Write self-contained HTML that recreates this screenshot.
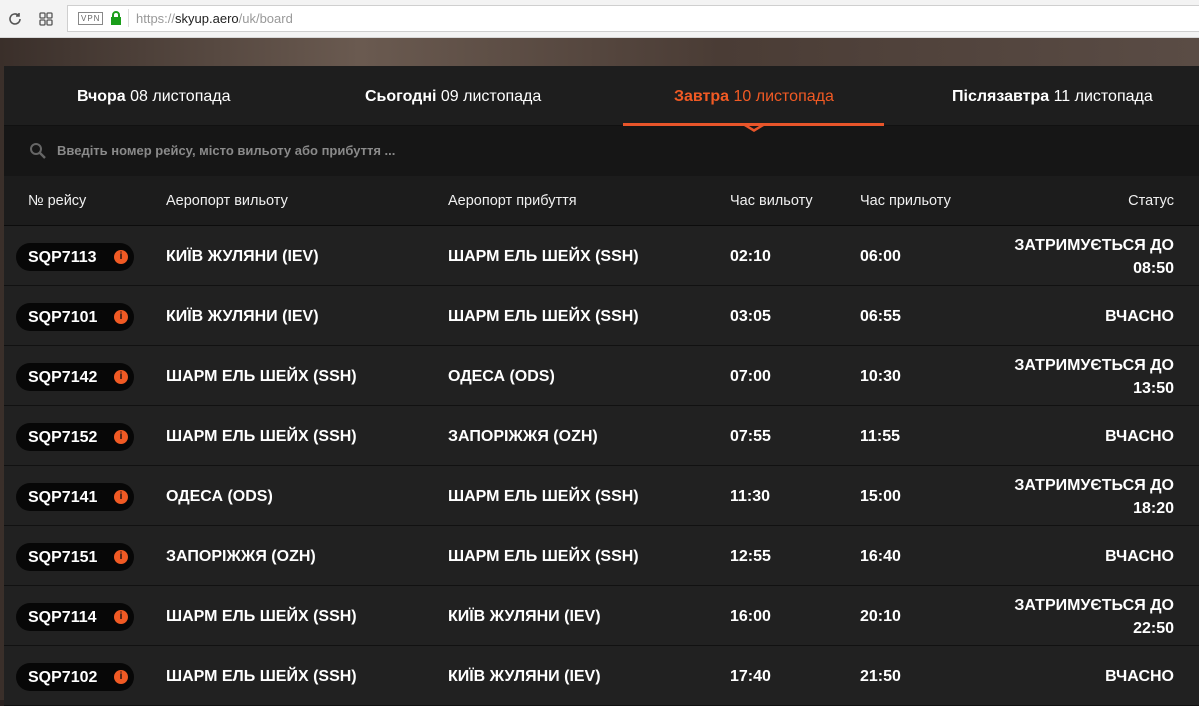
<!DOCTYPE html>
<html><head><meta charset="utf-8"><style>
*{margin:0;padding:0;box-sizing:border-box}
body{width:1199px;height:700px;overflow:hidden;background:#2a2220;font-family:"Liberation Sans","DejaVu Sans",sans-serif;position:relative}
.bar{position:absolute;left:0;top:0;width:1199px;height:38px;background:#f3f3f3;border-bottom:1px solid #d8d8d8}
.url{position:absolute;left:67px;top:5px;width:1140px;height:27px;background:#fff;border:1px solid #cfcfcf}
.bg{position:absolute;left:0;top:38px;width:1199px;height:662px;background:linear-gradient(90deg,#3a2f2a,#6a5a50 30%,#4a3c35 60%,#5a4c45 100%)}
.panel{position:absolute;left:4px;top:66px;width:1200px;height:640px;background:#1d1d1d;border-radius:6px 0 0 0;color:#fff}
.tabs{height:60px;position:relative;border-bottom:1px solid #111;background:#1e1e1e;z-index:2}
.tab{position:absolute;top:22px;font-size:16px;color:#fff}
.tab b{font-weight:bold}
.search{height:50px;background:#161616;position:relative}
.ch{height:50px;position:relative;border-bottom:1px solid #0c0c0c;background:#1c1c1c}
.ch span{position:absolute;top:17px;font-size:14.5px;color:#f0f0f0}
.row{height:60px;position:relative;border-bottom:1px solid #111;background:#212121}
.row span{position:absolute;font-size:16px;font-weight:bold;top:22px}
.pill{position:absolute;left:12px;top:17px;width:118px;height:28px;background:#070707;border-radius:14px}
.pill b{position:absolute;left:12px;top:6px;font-size:16px}
.pill i{position:absolute;left:98px;top:7px;width:14px;height:14px;border-radius:50%;background:#f15a24;color:#111;font-size:10px;font-style:normal;font-weight:bold;text-align:center;line-height:14px}
.st{position:absolute;right:30px;text-align:right;font-size:16px;font-weight:bold;line-height:23px}
</style></head><body>
<div class="bar">
<svg style="position:absolute;left:7px;top:11px" width="16" height="16" viewBox="0 0 16 16"><path d="M13 8a5 5 0 1 1-1.5-3.6M12 2v3h-3" fill="none" stroke="#555" stroke-width="1.6"/></svg>
<svg style="position:absolute;left:39px;top:12px" width="14" height="14"><rect x="1" y="1" width="5" height="5" rx="1" fill="none" stroke="#555" stroke-width="1.3"/><rect x="8" y="1" width="5" height="5" rx="1" fill="none" stroke="#555" stroke-width="1.3"/><rect x="1" y="8" width="5" height="5" rx="1" fill="none" stroke="#555" stroke-width="1.3"/><rect x="8" y="8" width="5" height="5" rx="1" fill="none" stroke="#555" stroke-width="1.3"/></svg>
<div class="url">
<div style="position:absolute;left:10px;top:6px;border:1px solid #888;font-size:8px;color:#666;padding:1px 2px;letter-spacing:1px">VPN</div>
<svg style="position:absolute;left:42px;top:4px" width="12" height="16"><path d="M3 7V5a3 3 0 0 1 6 0v2" fill="none" stroke="#1a9e1a" stroke-width="2"/><rect x="1" y="7" width="10" height="8" fill="#1a9e1a"/></svg>
<div style="position:absolute;left:60px;top:3px;height:18px;border-left:1px solid #ddd"></div>
<div style="position:absolute;left:68px;top:5px;font-size:13px;color:#999">https://<span style="color:#222">skyup.aero</span>/uk/board</div>
</div></div>
<div class="bg"></div>
<div class="panel">
<div class="tabs">
<div class="tab" style="left:73px"><b>Вчора</b> 08 листопада</div>
<div class="tab" style="left:361px"><b>Сьогодні</b> 09 листопада</div>
<div class="tab" style="left:670px;color:#f15a24"><b>Завтра</b> 10 листопада</div>
<div class="tab" style="left:948px"><b>Післязавтра</b> 11 листопада</div>
<div style="position:absolute;left:619px;top:57px;width:261px;height:3px;background:#e8552a"></div>
<svg style="position:absolute;left:740px;top:57px" width="20" height="9"><path d="M0 1.5L10 7.5L20 1.5" fill="none" stroke="#e8552a" stroke-width="2.5"/></svg>
</div>
<div class="search">
<svg style="position:absolute;left:25px;top:16px" width="17" height="17"><circle cx="7" cy="7" r="5" fill="none" stroke="#666" stroke-width="2"/><path d="M11 11l5 5" stroke="#666" stroke-width="2.4"/></svg>
<div style="position:absolute;left:53px;top:17px;font-size:13px;color:#8a8a8a;font-weight:bold">Введіть номер рейсу, місто вильоту або прибуття ...</div>
</div>
<div class="ch"><span style="left:24px">№ рейсу</span><span style="left:162px">Аеропорт вильоту</span><span style="left:444px">Аеропорт прибуття</span><span style="left:726px">Час вильоту</span><span style="left:856px">Час прильоту</span><span style="right:30px">Статус</span></div>

<div class="row"><div class="pill"><b>SQP7113</b><i>i</i></div><span style="left:162px">КИЇВ ЖУЛЯНИ (IEV)</span><span style="left:444px">ШАРМ ЕЛЬ ШЕЙХ (SSH)</span><span style="left:726px">02:10</span><span style="left:856px">06:00</span><div class="st" style="top:8px">ЗАТРИМУЄТЬСЯ ДО<br>08:50</div></div>
<div class="row"><div class="pill"><b>SQP7101</b><i>i</i></div><span style="left:162px">КИЇВ ЖУЛЯНИ (IEV)</span><span style="left:444px">ШАРМ ЕЛЬ ШЕЙХ (SSH)</span><span style="left:726px">03:05</span><span style="left:856px">06:55</span><div class="st" style="top:19px">ВЧАСНО</div></div>
<div class="row"><div class="pill"><b>SQP7142</b><i>i</i></div><span style="left:162px">ШАРМ ЕЛЬ ШЕЙХ (SSH)</span><span style="left:444px">ОДЕСА (ODS)</span><span style="left:726px">07:00</span><span style="left:856px">10:30</span><div class="st" style="top:8px">ЗАТРИМУЄТЬСЯ ДО<br>13:50</div></div>
<div class="row"><div class="pill"><b>SQP7152</b><i>i</i></div><span style="left:162px">ШАРМ ЕЛЬ ШЕЙХ (SSH)</span><span style="left:444px">ЗАПОРІЖЖЯ (OZH)</span><span style="left:726px">07:55</span><span style="left:856px">11:55</span><div class="st" style="top:19px">ВЧАСНО</div></div>
<div class="row"><div class="pill"><b>SQP7141</b><i>i</i></div><span style="left:162px">ОДЕСА (ODS)</span><span style="left:444px">ШАРМ ЕЛЬ ШЕЙХ (SSH)</span><span style="left:726px">11:30</span><span style="left:856px">15:00</span><div class="st" style="top:8px">ЗАТРИМУЄТЬСЯ ДО<br>18:20</div></div>
<div class="row"><div class="pill"><b>SQP7151</b><i>i</i></div><span style="left:162px">ЗАПОРІЖЖЯ (OZH)</span><span style="left:444px">ШАРМ ЕЛЬ ШЕЙХ (SSH)</span><span style="left:726px">12:55</span><span style="left:856px">16:40</span><div class="st" style="top:19px">ВЧАСНО</div></div>
<div class="row"><div class="pill"><b>SQP7114</b><i>i</i></div><span style="left:162px">ШАРМ ЕЛЬ ШЕЙХ (SSH)</span><span style="left:444px">КИЇВ ЖУЛЯНИ (IEV)</span><span style="left:726px">16:00</span><span style="left:856px">20:10</span><div class="st" style="top:8px">ЗАТРИМУЄТЬСЯ ДО<br>22:50</div></div>
<div class="row"><div class="pill"><b>SQP7102</b><i>i</i></div><span style="left:162px">ШАРМ ЕЛЬ ШЕЙХ (SSH)</span><span style="left:444px">КИЇВ ЖУЛЯНИ (IEV)</span><span style="left:726px">17:40</span><span style="left:856px">21:50</span><div class="st" style="top:19px">ВЧАСНО</div></div>
</div>
</body></html>
